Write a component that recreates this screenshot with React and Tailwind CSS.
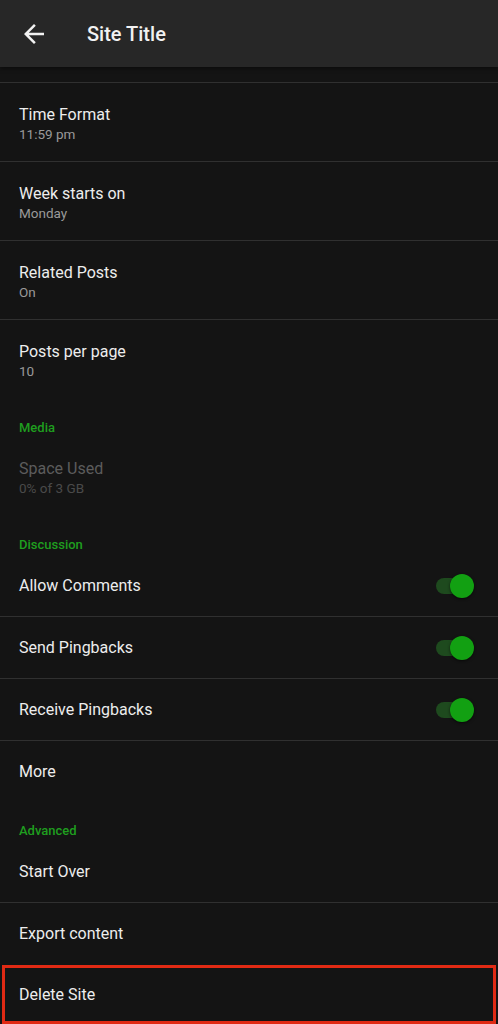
import React from 'react';

const SettingRow = ({ title, sub, last }) => (
  <div className={`h-[79px] flex flex-col pt-[21px] px-[19px] ${last ? '' : 'border-b border-[#303030]'}`}>
    <div className="text-[16px] leading-[21px] text-[#ededed]">{title}</div>
    <div className="text-[13.5px] leading-[18px] text-[#9a9a9a]">{sub}</div>
  </div>
);

const Toggle = () => (
  <div className="relative w-[38px] h-[24px] flex items-center">
    <div className="w-[34px] h-[16px] rounded-full bg-[#1e4a1e]" />
    <div className="absolute right-0 top-0 w-[24px] h-[24px] rounded-full bg-[#12a012] shadow-[0_1px_3px_rgba(0,0,0,0.6)]" />
  </div>
);

const SimpleRow = ({ title, toggle, border = true }) => (
  <div className={`h-[62px] flex items-center justify-between pl-[19px] pr-[24px] ${border ? 'border-b border-[#303030]' : ''}`}>
    <span className="text-[16px] text-[#ededed]">{title}</span>
    {toggle && <Toggle />}
  </div>
);

const SectionHeader = ({ label, pt }) => (
  <div className={`px-[19px] ${pt} pb-[2px] text-[13px] leading-[16px] font-medium text-[#1f9e1f]`}>{label}</div>
);

export default function App() {
  return (
    <div className="w-[498px] h-[1024px] overflow-hidden bg-[#141414]" style={{ fontFamily: 'Roboto, "Noto Sans", sans-serif' }}>
      <div className="h-[67px] bg-[#272727] flex items-center shadow-[0_2px_4px_rgba(0,0,0,0.4)]">
        <svg className="ml-[19px]" width="30" height="30" viewBox="0 0 24 24" fill="#f2f2f2">
          <path d="M20 11H7.83l5.59-5.59L12 4l-8 8 8 8 1.41-1.41L7.83 13H20v-2z" />
        </svg>
        <span className="ml-[38px] text-[20px] font-medium text-[#f2f2f2]">Site Title</span>
      </div>
      <div className="h-[16px] border-b border-[#303030]" />
      <SettingRow title="Time Format" sub="11:59 pm" />
      <SettingRow title="Week starts on" sub="Monday" />
      <SettingRow title="Related Posts" sub="On" />
      <SettingRow title="Posts per page" sub="10" last />

      <div className="px-[19px] pt-[21px] pb-[8px] text-[13px] leading-[16px] font-medium text-[#1f9e1f]">Media</div>
      <div className="h-[68px] flex flex-col justify-center px-[19px]">
        <div className="text-[16px] leading-[20px] text-[#5c5c5c]">Space Used</div>
        <div className="text-[13.5px] leading-[18px] text-[#4a4a4a]">0% of 3 GB</div>
      </div>

      <SectionHeader label="Discussion" pt="pt-[25px]" />
      <SimpleRow title="Allow Comments" toggle />
      <SimpleRow title="Send Pingbacks" toggle />
      <SimpleRow title="Receive Pingbacks" toggle />
      <SimpleRow title="More" border={false} />

      <SectionHeader label="Advanced" pt="pt-[20px]" />
      <SimpleRow title="Start Over" />
      <SimpleRow title="Export content" border={false} />
      <div className="mx-[2px] h-[59px] border-[3px] border-[#e02a14] flex items-center pl-[14px]">
        <span className="text-[16px] text-[#ededed]">Delete Site</span>
      </div>
    </div>
  );
}
